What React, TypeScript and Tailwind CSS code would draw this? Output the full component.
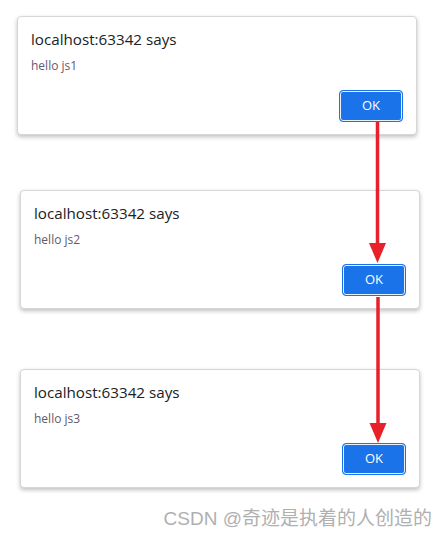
import React from "react";

type Dialog = { msg: string; ml: string; mt: string };

const dialogs: Dialog[] = [
  { msg: "hello js1", ml: "ml-[17px]", mt: "mt-[16px]" },
  { msg: "hello js2", ml: "ml-[20px]", mt: "mt-[55px]" },
  { msg: "hello js3", ml: "ml-[20px]", mt: "mt-[60px]" },
];

function AlertBox({ msg, ml, mt }: Dialog) {
  return (
    <div
      className={`${ml} ${mt} w-[400px] h-[119px] bg-white border border-[#d6d6d6] rounded-[4px] shadow-[0_2px_4px_rgba(0,0,0,0.25)] flex flex-col px-[13px] pt-[12px] pb-[12px]`}
    >
      <div className="text-[15.2px] leading-[20px] text-[#202124]">localhost:63342 says</div>
      <div className="mt-[9px] text-[12px] leading-[16px] text-[#5f5a6e]">{msg}</div>
      <div className="mt-auto flex justify-end">
        <button className="w-[64px] h-[32px] rounded-[4px] bg-[#1a73e8] border border-[#1a73e8] ring-1 ring-inset ring-white/90 text-white text-[13px] font-medium flex items-center justify-center">
          OK
        </button>
      </div>
    </div>
  );
}

function Arrow({ x, y1, y2 }: { x: number; y1: number; y2: number }) {
  return (
    <g>
      <line x1={x} y1={y1} x2={x} y2={y2 - 16} stroke="#e8202a" strokeWidth={3.5} />
      <polygon points={`${x - 8.5},${y2 - 20} ${x + 8.5},${y2 - 20} ${x},${y2}`} fill="#e8202a" />
    </g>
  );
}

export default function App() {
  return (
    <div
      className="relative w-[447px] h-[540px] bg-white overflow-hidden flex flex-col"
      style={{ fontFamily: '"Open Sans", "Noto Sans", sans-serif' }}
    >
      {dialogs.map((d) => (
        <AlertBox key={d.msg} {...d} />
      ))}
      <div
        className="mt-[19px] mr-[15px] self-end text-[19px] leading-[23px] text-[#b0b0b0]"
        style={{ fontFamily: '"Liberation Sans", "Noto Sans CJK SC", sans-serif' }}
      >
        CSDN @奇迹是执着的人创造的
      </div>
      <svg className="absolute inset-0 pointer-events-none" width={447} height={540}>
        <Arrow x={377.5} y1={122} y2={263} />
        <Arrow x={378} y1={297} y2={443} />
      </svg>
    </div>
  );
}
